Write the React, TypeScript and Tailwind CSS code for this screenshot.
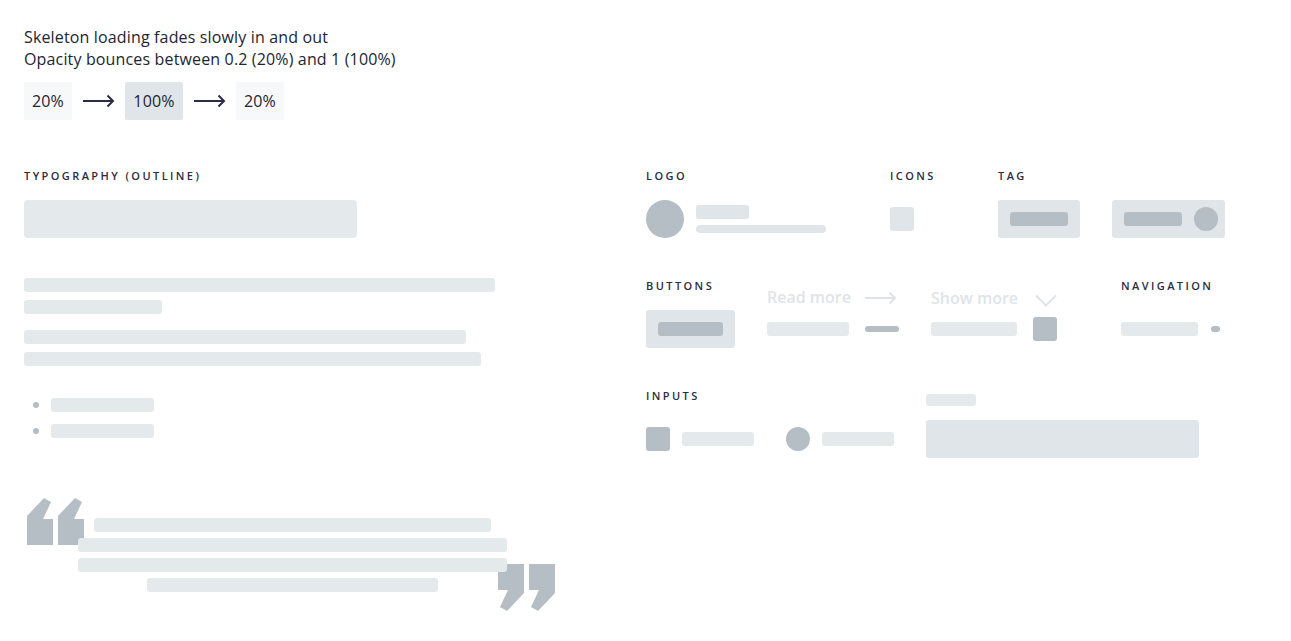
import React from "react";

const LIGHT = "bg-[#e4e9ec]";

function Heading({ children }: { children: React.ReactNode }) {
  return (
    <div className="whitespace-nowrap text-[11px] leading-4 font-semibold tracking-[0.22em] text-[#2b2d42] uppercase">
      {children}
    </div>
  );
}

function Arrow({ color }: { color: string }) {
  return (
    <svg width="33" height="14" viewBox="0 0 33 14" fill="none">
      <path d="M1 7 H31" stroke={color} strokeWidth="2" />
      <path d="M25.5 1.5 L31 7 L25.5 12.5" stroke={color} strokeWidth="2" fill="none" />
    </svg>
  );
}

function QuoteMarks({ flip }: { flip?: boolean }) {
  const mark = "0,47 26,47 26,21 16,21 24,4 17,0 0,18";
  return (
    <svg
      width="57"
      height="47"
      viewBox="0 0 57 47"
      className={flip ? "rotate-180" : ""}
    >
      <polygon points={mark} fill="#b4bec4" />
      <g transform="translate(31 0)">
        <polygon points={mark} fill="#b4bec4" />
      </g>
    </svg>
  );
}

export default function App() {
  return (
    <div
      className="min-h-[641px] bg-white px-6 pt-[26px] text-[#222531]"
      style={{ fontFamily: "'Open Sans', 'Noto Sans', sans-serif" }}
    >
      <div className="text-[16px] leading-[22px] tracking-[0.15px]">
        <div>Skeleton loading fades slowly in and out</div>
        <div>Opacity bounces between 0.2 (20%) and 1 (100%)</div>
      </div>
      <div className="mt-3 flex items-center gap-[10px] text-[16px] tracking-[0.15px]">
        <div className="flex h-[38px] w-[48px] items-center justify-center bg-[#f7f8f9]">20%</div>
        <Arrow color="#2b2d42" />
        <div className="flex h-[38px] w-[58px] items-center justify-center rounded-[2px] bg-[#dfe5e8]">100%</div>
        <Arrow color="#2b2d42" />
        <div className="flex h-[38px] w-[48px] items-center justify-center bg-[#f7f8f9]">20%</div>
      </div>

      <div className="mt-12 flex">
        {/* Left column */}
        <div className="w-[622px] shrink-0">
          <div className="h-8">
            <Heading>Typography (outline)</Heading>
          </div>
          <div className={`h-[38px] w-[333px] rounded-[4px] ${LIGHT}`} />

          <div className="mt-10 flex flex-col">
            <div className={`h-[14px] w-[471px] rounded-[3px] ${LIGHT}`} />
            <div className={`mt-2 h-[14px] w-[138px] rounded-[3px] ${LIGHT}`} />
            <div className={`mt-4 h-[14px] w-[442px] rounded-[3px] ${LIGHT}`} />
            <div className={`mt-2 h-[14px] w-[457px] rounded-[3px] ${LIGHT}`} />
          </div>

          <div className="mt-8 flex flex-col gap-3">
            <div className="flex items-center">
              <div className="ml-[9px] h-[6px] w-[6px] rounded-full bg-[#b4bec4]" />
              <div className={`ml-3 h-[14px] w-[103px] rounded-[3px] ${LIGHT}`} />
            </div>
            <div className="flex items-center">
              <div className="ml-[9px] h-[6px] w-[6px] rounded-full bg-[#b4bec4]" />
              <div className={`ml-3 h-[14px] w-[103px] rounded-[3px] ${LIGHT}`} />
            </div>
          </div>

          <div className="relative mt-[60px] h-[112px] w-[532px]">
            <div className="absolute left-[3px] top-0">
              <QuoteMarks />
            </div>
            <div className="absolute left-[474px] top-[66px]">
              <QuoteMarks flip />
            </div>
            <div className="relative flex flex-col gap-[6px] pt-5">
              <div className={`ml-[70px] h-[14px] w-[397px] rounded-[3px] ${LIGHT}`} />
              <div className={`ml-[54px] h-[14px] w-[429px] rounded-[3px] ${LIGHT}`} />
              <div className={`ml-[54px] h-[14px] w-[429px] rounded-[3px] ${LIGHT}`} />
              <div className={`ml-[123px] h-[14px] w-[291px] rounded-[3px] ${LIGHT}`} />
            </div>
          </div>
        </div>

        {/* Right column */}
        <div className="flex flex-col gap-10">
          {/* Row 1 */}
          <div className="flex items-start">
            <div className="w-[244px]">
              <div className="h-8">
                <Heading>Logo</Heading>
              </div>
              <div className="flex h-[38px] items-center gap-3">
                <div className="h-[38px] w-[38px] rounded-full bg-[#b4bec4]" />
                <div className="flex flex-col gap-[6px]">
                  <div className="h-[14px] w-[53px] rounded-[3px] bg-[#dfe5e8]" />
                  <div className="h-2 w-[130px] rounded-full bg-[#dfe5e8]" />
                </div>
              </div>
            </div>
            <div className="w-[108px]">
              <div className="h-8">
                <Heading>Icons</Heading>
              </div>
              <div className="flex h-[38px] items-center">
                <div className="h-6 w-6 rounded-[3px] bg-[#dfe5e8]" />
              </div>
            </div>
            <div>
              <div className="h-8">
                <Heading>Tag</Heading>
              </div>
              <div className="flex gap-8">
                <div className="flex h-[38px] w-[82px] items-center rounded-[3px] bg-[#dfe5e8] px-3">
                  <div className="h-[14px] w-[58px] rounded-[3px] bg-[#b4bec4]" />
                </div>
                <div className="flex h-[38px] w-[113px] items-center rounded-[3px] bg-[#dfe5e8] pl-3">
                  <div className="h-[14px] w-[58px] rounded-[3px] bg-[#b4bec4]" />
                  <div className="ml-3 h-6 w-6 rounded-full bg-[#b4bec4]" />
                </div>
              </div>
            </div>
          </div>

          {/* Row 2 */}
          <div className="flex items-start">
            <div className="w-[121px]">
              <div className="h-8">
                <Heading>Buttons</Heading>
              </div>
              <div className="flex h-[38px] w-[89px] items-center justify-center rounded-[3px] bg-[#dfe5e8]">
                <div className="h-[14px] w-[65px] rounded-[3px] bg-[#b4bec4]" />
              </div>
            </div>
            <div className="w-[164px]">
              <div className="flex h-8 items-start pt-[9px]">
                <span className="w-[97px] whitespace-nowrap text-[16px] leading-5 font-semibold text-[#e0e4e7]">Read more</span>
                <div className="pt-[4px]">
                  <Arrow color="#dfe3e6" />
                </div>
              </div>
              <div className="flex h-[38px] items-center">
                <div className={`h-[14px] w-[82px] rounded-[3px] ${LIGHT}`} />
                <div className="ml-4 h-[6px] w-[34px] rounded-full bg-[#b4bec4]" />
              </div>
            </div>
            <div className="w-[190px]">
              <div className="flex h-8 items-start pt-[10px]">
                <span className="w-[104px] whitespace-nowrap text-[16px] leading-5 font-semibold text-[#e0e4e7]">Show more</span>
                <svg width="22" height="13" viewBox="0 0 22 13" fill="none" className="mt-[6px]">
                  <path d="M1 1.5 L11 11.5 L21 1.5" stroke="#dfe3e6" strokeWidth="2" />
                </svg>
              </div>
              <div className="flex h-[38px] items-center">
                <div className={`h-[14px] w-[86px] rounded-[3px] ${LIGHT}`} />
                <div className="ml-4 h-6 w-6 rounded-[3px] bg-[#b4bec4]" />
              </div>
            </div>
            <div>
              <div className="h-8">
                <Heading>Navigation</Heading>
              </div>
              <div className="flex h-[38px] items-center">
                <div className={`h-[14px] w-[77px] rounded-[3px] ${LIGHT}`} />
                <div className="ml-[13px] h-[6px] w-[9px] rounded-full bg-[#b4bec4]" />
              </div>
            </div>
          </div>

          {/* Row 3 */}
          <div className="flex items-start">
            <div className="w-[280px]">
              <div className="h-8">
                <Heading>Inputs</Heading>
              </div>
              <div className="flex h-[38px] items-center">
                <div className="h-6 w-6 rounded-[3px] bg-[#b4bec4]" />
                <div className={`ml-3 h-[14px] w-[72px] rounded-[3px] ${LIGHT}`} />
                <div className="ml-8 h-6 w-6 rounded-full bg-[#b4bec4]" />
                <div className={`ml-3 h-[14px] w-[72px] rounded-[3px] ${LIGHT}`} />
              </div>
            </div>
            <div>
              <div className="h-8 pt-[6px]">
                <div className={`h-3 w-[50px] rounded-[3px] ${LIGHT}`} />
              </div>
              <div className="h-[38px] w-[273px] rounded-[3px] bg-[#dfe5e8]" />
            </div>
          </div>
        </div>
      </div>
    </div>
  );
}
